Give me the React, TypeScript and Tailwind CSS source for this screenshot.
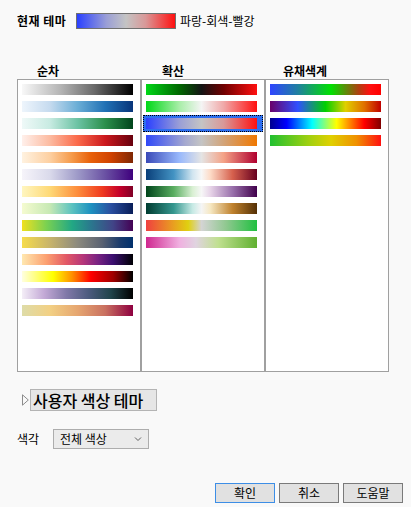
import React from "react";

const sequential = [
  "bg-[linear-gradient(to_right,#f8f8f8,#b4b4b4_35%,#6a6a6a_65%,#000000)]",
  "bg-[linear-gradient(to_right,#eef5fc,#c6dbef_25%,#6baed6_50%,#2171b5_75%,#08357a)]",
  "bg-[linear-gradient(to_right,#eff9f8,#c8ebe2_25%,#6cc3a4_50%,#2b8f4c_75%,#00441b)]",
  "bg-[linear-gradient(to_right,#fff0eb,#fcbba1_25%,#fb6a4a_50%,#cb181d_75%,#67000d)]",
  "bg-[linear-gradient(to_right,#fff2e0,#fdd0a2_25%,#f59a4a_45%,#e8600a_62%,#d04200_80%,#7f2704)]",
  "bg-[linear-gradient(to_right,#f6f4fa,#dadaeb_25%,#9e9ac8_50%,#6a51a3_75%,#3f007d)]",
  "bg-[linear-gradient(to_right,#fff6c0,#fed976_25%,#fd8d3c_50%,#f03b20_72%,#c4002a_88%,#800026)]",
  "bg-[linear-gradient(to_right,#f5fbd0,#c7e9b4_25%,#5cc3c0_45%,#1d91c0_62%,#2a4fa0_80%,#081d58)]",
  "bg-[linear-gradient(to_right,#f0e020,#7ad151_22%,#22a884_45%,#2a788e_62%,#414487_82%,#440154)]",
  "bg-[linear-gradient(to_right,#f6dc4c,#c8b46a_25%,#8c8a7e_50%,#5a6272_72%,#1c3c6c_88%,#002f6c)]",
  "bg-[linear-gradient(to_right,#ffe8b0,#fca070_22%,#e25866_40%,#b5367a_55%,#7a2382_68%,#3b0f70_82%,#000004)]",
  "bg-[linear-gradient(to_right,#ffffe0,#ffff00_28%,#ff9000_45%,#ff0000_62%,#a00000_82%,#000000)]",
  "bg-[linear-gradient(to_right,#f4eef7,#c3a9d6_20%,#8078a8_40%,#4c5b7e_60%,#20444a_80%,#000000)]",
  "bg-[linear-gradient(to_right,#dedca8,#f2d084_25%,#e6a670_50%,#c97060_75%,#8e0040)]",
];

const diverging = [
  "bg-[linear-gradient(to_right,#00d818,#006800_30%,#141414_50%,#700000_70%,#ff1010)]",
  "bg-[linear-gradient(to_right,#00d818,#a8eea8_30%,#f4f4f4_50%,#f0a8a8_70%,#ff1010)]",
  "bg-[linear-gradient(to_right,#2a40ff,#9a9ed6_30%,#c4c4c4_50%,#d99898_70%,#ff1010)]",
  "bg-[linear-gradient(to_right,#3048f8,#a4a8d0_35%,#c4c4c4_50%,#d4a070_72%,#f07800)]",
  "bg-[linear-gradient(to_right,#3a4ab8,#98b8fc_30%,#e4e4e4_50%,#f4a286_70%,#b00030)]",
  "bg-[linear-gradient(to_right,#0a3f7a,#4393c3_25%,#d1e5f0_42%,#f7f7f7_50%,#fddbc7_58%,#d6604d_78%,#67001f)]",
  "bg-[linear-gradient(to_right,#00441b,#5aae61_25%,#d9f0d3_42%,#f7f7f7_50%,#e7d4e8_58%,#9970ab_78%,#40004b)]",
  "bg-[linear-gradient(to_right,#003c30,#35978f_25%,#c7eae5_42%,#f5f5f5_50%,#f6e8c3_58%,#bf812d_78%,#543005)]",
  "bg-[linear-gradient(to_right,#f04040,#e8a020_25%,#e0d010_38%,#d4d4d4_50%,#90c890_72%,#20c040)]",
  "bg-[linear-gradient(to_right,#d02890,#f0b0e0_30%,#e0d4e0_45%,#c0e090_65%,#60b030)]",
];

const chromatic = [
  "bg-[linear-gradient(to_right,#2f45ff,#2080a0_25%,#00e000_55%,#b04010_80%,#ff1010_90%,#ff0000)]",
  "bg-[linear-gradient(to_right,#6a006a,#3050ff_25%,#00d000_50%,#e0d000_68%,#e07000_85%,#c00000)]",
  "bg-[linear-gradient(to_right,#00008f,#0000ff_15%,#00ffff_38%,#ffff00_60%,#ff0000_85%,#800000)]",
  "bg-[linear-gradient(to_right,#20c030,#a0d010_35%,#e0d000_55%,#f09000_78%,#ff1010)]",
];

const columns = [
  { title: "순차", pad: "pl-5", bars: sequential, selected: -1 },
  { title: "확산", pad: "pl-[21px]", bars: diverging, selected: 2 },
  { title: "유채색계", pad: "pl-[18px]", bars: chromatic, selected: -1 },
];

const font = "font-['Noto_Sans_CJK_KR','Noto_Sans',sans-serif]";

function Bar({ cls, selected }: { cls: string; selected: boolean }) {
  return (
    <div
      className={
        "mx-px h-[17px] py-[3px] pl-[3px] " +
        (selected ? "bg-[#2d6ff0] outline outline-1 outline-dotted outline-black -outline-offset-1" : "")
      }
    >
      <div className={"h-[11px] w-[111px] " + cls} />
    </div>
  );
}

function Triangle() {
  return (
    <svg width="7" height="12" viewBox="0 0 7 12" className="mr-px">
      <path d="M0.5 0.8 L6.3 6 L0.5 11.2 Z" fill="none" stroke="#8c8c8c" strokeWidth="1" />
    </svg>
  );
}

function Chevron() {
  return (
    <svg width="8" height="6" viewBox="0 0 8 6">
      <path d="M1 1.5 L4 4.5 L7 1.5" fill="none" stroke="#606060" strokeWidth="1" />
    </svg>
  );
}

export default function App() {
  return (
    <div className={"w-[411px] h-[507px] bg-[#f9f9f9] text-black pt-[13px] " + font}>
      {/* current theme */}
      <div className="flex items-center h-[16px] pl-[17px]">
        <span className="w-[59px] text-[12px] font-bold leading-none tracking-[0.5px]">현재 테마</span>
        <div className="w-[100px] h-[16px] border border-[#707070] bg-[linear-gradient(to_right,#2a40ff,#9a9ed6_30%,#c4c4c4_50%,#d99898_70%,#ff1010)]" />
        <span className="ml-[4px] text-[12px] leading-none">파랑-회색-빨강</span>
      </div>

      {/* theme columns */}
      <div className="mt-[33px] flex pl-[17px] h-[17px] items-center">
        {columns.map((c) => (
          <div key={c.title} className={"w-[124px] text-[12px] font-bold leading-none " + c.pad}>
            {c.title}
          </div>
        ))}
      </div>
      <div className="flex pl-[17px]">
        {columns.map((c) => (
          <div key={c.title} className="w-[124px] h-[293px] border border-[#a0a0a0] bg-white pt-px">
            {c.bars.map((b, i) => (
              <Bar key={i} cls={b} selected={i === c.selected} />
            ))}
          </div>
        ))}
      </div>

      {/* custom theme */}
      <div className="mt-[17px] flex items-center pl-[22px] h-[22px]">
        <Triangle />
        <div className="h-[22px] w-[127px] border border-[#b4b4b4] bg-[#e6e6e6] flex items-center pl-[2px] text-[16px] font-medium leading-none">
          사용자 색상 테마
        </div>
      </div>

      {/* colour vision */}
      <div className="mt-[18px] flex items-center pl-[17px] h-[20px]">
        <span className="text-[12px] leading-none w-[36px]">색각</span>
        <div className="w-[96px] h-[20px] border border-[#adadad] bg-[#ebebeb] flex items-center justify-between pl-[6px] pr-[6px] text-[12px] leading-none">
          <span>전체 색상</span>
          <Chevron />
        </div>
      </div>

      {/* dialog buttons */}
      <div className="mt-[34px] flex justify-end gap-[4px] pr-[8px]">
        <button className="w-[60px] h-[20px] border border-[#3d8ee6] bg-[#e1e1e1] text-[12px] leading-none">확인</button>
        <button className="w-[60px] h-[20px] border border-[#7a7a7a] bg-[#e1e1e1] text-[12px] leading-none">취소</button>
        <button className="w-[60px] h-[20px] border border-[#7a7a7a] bg-[#e1e1e1] text-[12px] leading-none">도움말</button>
      </div>
    </div>
  );
}
